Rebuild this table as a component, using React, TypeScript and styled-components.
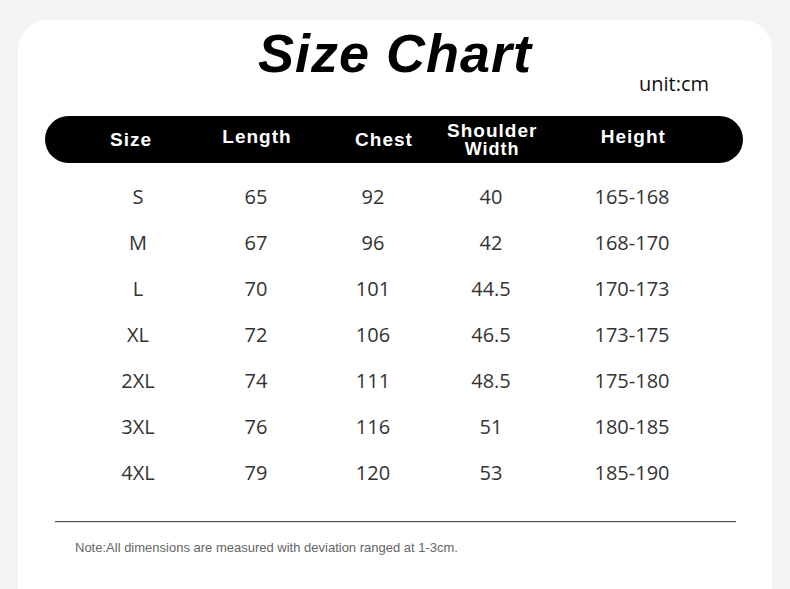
import React from "react";
import styled, { createGlobalStyle } from "styled-components";

const GlobalStyle = createGlobalStyle`
  html, body { margin: 0; padding: 0; background: #f4f4f4; }
  body { font-family: "Liberation Sans", Arial, sans-serif; }
`;

const Page = styled.div`
  padding: 20px 18px 0;
`;

const Card = styled.div`
  background: #ffffff;
  border-radius: 30px 30px 0 0;
  min-height: 569px;
  padding-top: 6px;
  display: flex;
  flex-direction: column;
  box-sizing: border-box;
`;

const Title = styled.h1`
  margin: 0;
  font-family: "Liberation Sans", Arial, sans-serif;
  font-weight: 700;
  font-style: italic;
  font-size: 54px;
  line-height: 54px;
  letter-spacing: 1px;
  text-align: center;
  color: #000;
`;

const Unit = styled.div`
  align-self: flex-end;
  margin: -6px 63px 0 0;
  font-family: "Open Sans", sans-serif;
  font-size: 20px;
  line-height: 20px;
  color: #111;
`;

const HeaderBar = styled.div`
  margin: 22px 29px 0 27px;
  height: 47px;
  border-radius: 24px;
  background: #000;
  display: flex;
  align-items: center;
  padding-left: 24px;
`;

const HeadCell = styled.div<{ $w: number; $lift?: number; $top?: number }>`
  flex: 0 0 ${(p) => p.$w}px;
  display: flex;
  flex-direction: column;
  align-items: center;
  justify-content: center;
  white-space: nowrap;
  color: #fff;
  font-family: "Liberation Sans", Arial, sans-serif;
  font-weight: 700;
  font-size: 19px;
  line-height: 16px;
  letter-spacing: 1px;
  padding-bottom: ${(p) => p.$lift ?? 0}px;
  padding-top: ${(p) => p.$top ?? 0}px;
`;

const HeadLine = styled.span<{ $size: number }>`
  font-size: ${(p) => p.$size}px;
  line-height: 18px;
`;

const Body = styled.div`
  margin: 10px 29px 0 27px;
  padding-left: 34px;
`;

const Row = styled.div`
  display: flex;
  align-items: center;
  height: 46px;
`;

const Cell = styled.div<{ $w: number }>`
  flex: 0 0 ${(p) => p.$w}px;
  display: flex;
  justify-content: center;
  white-space: nowrap;
  font-family: "Open Sans", sans-serif;
  font-size: 20px;
  color: #333;
`;

const Divider = styled.div`
  margin: 26px 36px 0 37px;
  border-top: 1px solid #4a4a4a;
  border-bottom: 1px solid #e4e4e4;
`;

const Note = styled.p`
  margin: 17px 0 0 57px;
  font-family: "Liberation Sans", Arial, sans-serif;
  font-size: 13px;
  line-height: 15px;
  color: #666;
`;

const colWidths = [118, 118, 116, 120, 162];

const rows: string[][] = [
  ["S", "65", "92", "40", "165-168"],
  ["M", "67", "96", "42", "168-170"],
  ["L", "70", "101", "44.5", "170-173"],
  ["XL", "72", "106", "46.5", "173-175"],
  ["2XL", "74", "111", "48.5", "175-180"],
  ["3XL", "76", "116", "51", "180-185"],
  ["4XL", "79", "120", "53", "185-190"],
];

export default function App() {
  return (
    <>
      <GlobalStyle />
      <Page>
        <Card>
          <Title>Size Chart</Title>
          <Unit>unit:cm</Unit>
          <HeaderBar>
            <HeadCell $w={124}>Size</HeadCell>
            <HeadCell $w={128} $lift={5}>Length</HeadCell>
            <HeadCell $w={126}>Chest</HeadCell>
            <HeadCell $w={88} $top={1}>
              <HeadLine $size={19}>Shoulder</HeadLine>
              <HeadLine $size={18}>Width</HeadLine>
            </HeadCell>
            <HeadCell $w={192} $lift={5}>Height</HeadCell>
          </HeaderBar>
          <Body>
            {rows.map((r) => (
              <Row key={r[0]}>
                {r.map((v, i) => (
                  <Cell key={i} $w={colWidths[i]}>
                    {v}
                  </Cell>
                ))}
              </Row>
            ))}
          </Body>
          <Divider />
          <Note>Note:All dimensions are measured with deviation ranged at 1-3cm.</Note>
        </Card>
      </Page>
    </>
  );
}
